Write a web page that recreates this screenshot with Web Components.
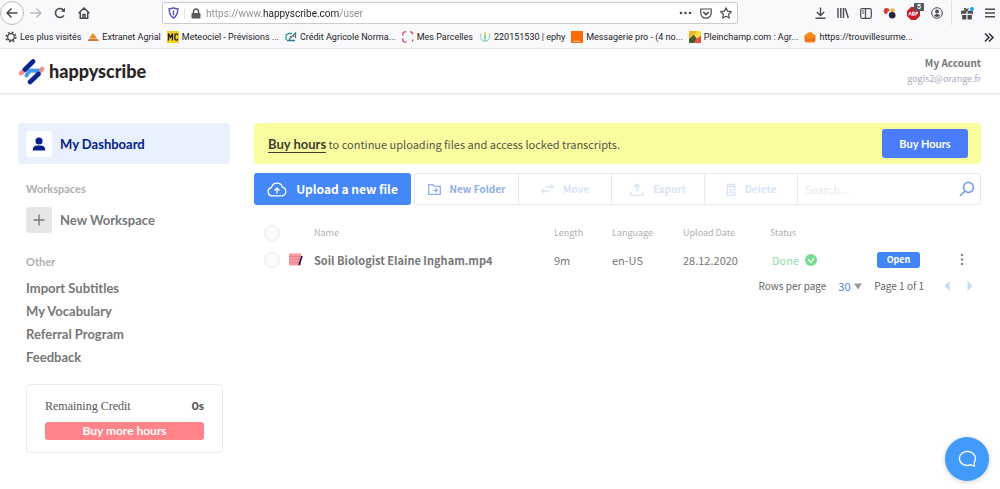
<!DOCTYPE html>
<html lang="en">
<head>
<meta charset="utf-8">
<meta name="viewport" content="width=device-width, initial-scale=1">
<title>Happy Scribe</title>
<style>
  body {
    margin: 0;
    background: #fff;
    color: #666;
    font: 12px/16px "Noto Sans CJK SC", "Noto Sans", sans-serif;
    --brand: #4285f5;
    --navy: #05208c;
    --line: #e6e8f0;
    --round: Lato, "Noto Sans", sans-serif;
    --system: Roboto, "Open Sans", sans-serif;
  }
</style>
</head>
<body>
<browser-toolbar></browser-toolbar>
<bookmark-bar>
  <bookmark-link kind="gear">Les plus visités</bookmark-link>
  <bookmark-link kind="agrial">Extranet Agrial</bookmark-link>
  <bookmark-link kind="mc">Meteociel - Prévisions ...</bookmark-link>
  <bookmark-link kind="ca">Crédit Agricole Norma...</bookmark-link>
  <bookmark-link kind="parcel">Mes Parcelles</bookmark-link>
  <bookmark-link kind="ephy">220151530 | ephy</bookmark-link>
  <bookmark-link kind="orange">Messagerie pro - (4 no...</bookmark-link>
  <bookmark-link kind="plein">Pleinchamp.com : Agr...</bookmark-link>
  <bookmark-link kind="house">https://trouvillesurme...</bookmark-link>
</bookmark-bar>
<app-header email="gogis2@orange.fr">My Account</app-header>
<app-layout>
  <side-nav slot="side"></side-nav>
  <hours-banner></hours-banner>
  <file-toolbar></file-toolbar>
  <file-table></file-table>
  <table-pager></table-pager>
</app-layout>
<chat-launcher></chat-launcher>

<script>
const define = (name, html, setup) => {
  const tpl = document.createElement('template');
  tpl.innerHTML = `<style>
    *, *::before { box-sizing: border-box; }
    :host { display: block; box-sizing: border-box; }
    button, input, select { font: inherit; color: inherit; border: 0; padding: 0; margin: 0; background: none; }
    a { color: inherit; text-decoration: none; }
    svg { display: block; flex: none; fill: none; }
    svg:not([stroke]) { stroke: currentColor; }
  </style>` + html;
  customElements.define(name, class extends HTMLElement {
    constructor() {
      super();
      this.attachShadow({ mode: 'open' }).append(tpl.content.cloneNode(true));
    }
    connectedCallback() { if (setup) setup(this, this.shadowRoot); }
  });
};

define('browser-toolbar', `<style>
  :host { display: flex; align-items: center; height: 26px; background: #f9f9fb; color: #4a4a50; font: 10px/16px var(--system); padding: 0 5px 0 0; }
  .nav { display: flex; align-items: center; width: 162px; flex: none; }
  .nav button { width: 24px; display: grid; place-items: center; }
  .nav .back { width: 24px; height: 24px; border: 1px solid #b9b9bd; border-radius: 50%; background: #fff; }
  .nav .next { color: #b9b9bd; }
  .nav .back svg { stroke-width: 1.500; }
  .url { display: flex; align-items: center; flex: 1; height: 22px; border: 1px solid #ccccd0; border-radius: 2px; background: #fff; padding: 0 5px; }
  .url .lock { border-left: 1px solid #e3e3e6; padding-left: 6px; margin: 0 5px; }
  .url input { flex: 1; min-width: 0; height: 18px; outline: 0; color: #222;
    background: linear-gradient(90deg, #8c8c90 57px, #1c1c20 57px 133px, #8c8c90 133px); background-clip: text; -webkit-background-clip: text; -webkit-text-fill-color: transparent; }
  .actions, .tools { display: flex; align-items: center; gap: 8px; }
  .tools { padding-left: 77px; gap: 11px; }
  .tools span { position: relative; }
  .count { position: absolute; left: 7px; top: -4px; background: #55565c; color: #fff; font: bold 7px/8px var(--system); padding: 0 3px; border-radius: 1px; }
  .menu { border-left: 1px solid #e0e0e3; height: 24px; padding-left: 9px; margin-left: -3px; display: flex; align-items: center; gap: 11px; }
</style>
<div class="nav">
  <button class="back" aria-label="Back"><svg width="12" height="12" viewBox="0 0 12 12"><path d="M11.500 6H1M5.500 1.500 1 6l4.500 4.500"/></svg></button>
  <button class="next" aria-label="Forward"><svg width="12" height="12" viewBox="0 0 12 12" stroke-width="1.300"><path d="M.5 6H11M6.500 1.500 11 6l-4.500 4.500"/></svg></button>
  <button aria-label="Reload"><svg width="12" height="12" viewBox="0 0 12 12" stroke-width="1.600"><path d="M9.800 8.300A4.500 4.500 0 1 1 9.500 3.200L10.500 4.200"/><path d="M11 .8v4H7z" fill="currentColor" stroke="none"/></svg></button>
  <button aria-label="Home"><svg width="12" height="12" viewBox="0 0 12 12" stroke-width="1.500"><path d="M.6 6.300 6 1l5.400 5.300M2.300 5.500v5.700h7.400V5.500M5 11V7.500h2V11"/></svg></button>
</div>
<div class="url">
  <svg width="11" height="12" viewBox="0 0 11 12" stroke="#5b55b8" stroke-width="1.500"><path d="M5.500.9C4.300 1.600 2.500 1.800 1.200 1.800c0 4.800.8 7.200 4.300 9.200 3.500-2 4.300-4.400 4.300-9.200-1.300 0-3.100-.2-4.300-.9z"/><path d="M5.500 3.500v4.700"/></svg>
  <span class="lock"><svg width="10" height="11" viewBox="0 0 10 11" stroke="#5a5a5e" stroke-width="1.500"><rect x=".5" y="5" width="9" height="5.500" rx=".8" fill="#5a5a5e" stroke="none"/><path d="M2.500 5.500V3.500a2.500 2.500 0 0 1 5 0v2"/></svg></span>
  <input type="text" aria-label="Address" value="https://www.happyscribe.com/user">
  <div class="actions">
    <svg width="13" height="4" viewBox="0 0 13 4" stroke="none"><g fill="#4a4a50"><circle cx="2" cy="2" r="1.300"/><circle cx="6.500" cy="2" r="1.300"/><circle cx="11" cy="2" r="1.300"/></g></svg>
    <svg width="12" height="11" viewBox="0 0 12 11" stroke-width="1.200"><path d="M.8 1h10.400v4.200a5.200 5 0 0 1-10.400 0z"/><path d="m3.300 4 2.700 2.600L8.700 4" stroke-width="1.500"/></svg>
    <svg width="12" height="12" viewBox="0 0 12 12" stroke-width="1.200" stroke-linejoin="round"><path d="m6 .8 1.600 3.400 3.700.5-2.700 2.600.7 3.700L6 9.200 2.700 11l.7-3.700L.7 4.700l3.700-.5z"/></svg>
  </div>
</div>
<div class="tools">
  <svg width="11" height="12" viewBox="0 0 11 12" stroke-width="1.400"><path d="M5.500.5v8M1.800 5l3.700 3.600L9.200 5M.5 11.300h10"/></svg>
  <svg width="12" height="12" viewBox="0 0 12 12" stroke-width="1.400"><path d="M1 1v10M3.800 1v10M6.500 1v10M8.200 1.200 11.300 11"/></svg>
  <svg width="12" height="11" viewBox="0 0 12 11" stroke-width="1.200"><rect x=".7" y=".7" width="10.600" height="9.600" rx="1.500"/><path d="M5.500.7v9.600M2.200 3h2M2.200 5h2"/></svg>
  <svg width="13" height="12" viewBox="0 0 13 12" stroke="none"><circle cx="3.600" cy="4" r="2.900" fill="#d0402e"/><circle cx="9.500" cy="3.500" r="2.200" fill="#e6b735"/><circle cx="6.500" cy="6.300" r="2.300" fill="#e8e8ea"/><circle cx="9.200" cy="8.200" r="3.300" fill="#20243f"/></svg>
  <span><svg width="13" height="13" viewBox="0 0 13 13" stroke="none"><path d="M4 0h5l4 4v5l-4 4H4L0 9V4z" fill="#c81f25"/><path d="M1.800 8.500 3.200 5l1.300 3.500M5.600 5v3.300h1.500V5zM8.800 8.500V5.200h1.700v1.500H9" stroke="#fff"/></svg><b class="count">5</b></span>
  <svg width="12" height="12" viewBox="0 0 12 12"><circle cx="6" cy="6" r="5.300"/><circle cx="6" cy="4.500" r="1.900" fill="currentColor" stroke="none"/><path d="M2.800 8.800Q6 5.300 9.200 8.800 6 11 2.800 8.800z" fill="currentColor" stroke="none"/></svg>
  <div class="menu">
    <svg width="13" height="13" viewBox="0 0 13 13" stroke-width="1.200"><path d="M.8 4.300h10.400v2.500H.8zM1.800 7v5h8.400V7" fill="currentColor"/><path d="M6 4v9M1 7.300h10" stroke="#f9f9fb"/><path d="M6 4C3 4 3 1 4.500 1.500 5.500 2 6 4 6 4s.5-2 1.500-2.500"/><circle cx="11" cy="2" r="2" fill="#1da1f2" stroke="none"/></svg>
    <svg width="10" height="10" viewBox="0 0 10 10" stroke-width="1.400"><path d="M0 1.300h10M0 5h10M0 8.700h10"/></svg>
  </div>
</div>`);

define('bookmark-bar', `<style>
  :host { display: flex; align-items: center; gap: 6px; height: 23px; padding: 0 6px 0 5px; background: #f9f9fb; border-bottom: 1px solid #e3e3e6; color: #222226; font: 9px/14px var(--system); }
  svg { margin-left: auto; }
</style><slot></slot>
<svg width="10" height="9" viewBox="0 0 10 9" stroke-width="1.400"><path d="m1 .5 4 4-4 4M5 .5l4 4-4 4"/></svg>`);

const bookmarkIcons = {
  gear: '<circle cx="6" cy="6" r="3.300" stroke="#444" stroke-width="1.200"/><circle cx="6" cy="6" r="4.800" stroke="#444" stroke-width="1.500" stroke-dasharray="1.900 1.870"/>',
  agrial: '<path d="M2 7.500 5.800 2l4.500 5.500z" fill="#f58a1f" stroke="none"/><path d="M1 8.500q5-1.500 10.500 0V10H1z" fill="#d3752f" stroke="none"/>',
  mc: '<path d="M0 0h12v12H0z" fill="#f0d11c" stroke="none"/><path d="M1.500 9.500v-7l2 4 2-4v7M10.700 4.200Q10.500 2.800 9.300 2.800 7.800 2.800 7.800 6t1.500 3.200q1.200 0 1.400-1.400" stroke="#222" stroke-width="1.300"/>',
  ca: '<path d="M1 9V4l3-1.500h3" stroke="#23a094" stroke-width="1.300"/><path d="M2 9.500h8M4 8.500 10.500 2v5" stroke="#337f8e" stroke-width="1.300"/><path d="M4.500 5.500h5" stroke="#bd7b78"/>',
  parcel: '<path d="M4.300.8H3A2 2 0 0 0 .8 3v1.500M.8 7.500V9A2 2 0 0 0 3 11.200h1.300M8 .8h1.200L11.200 3M11.200 8.500 10 10.500" stroke="#d3405a" stroke-width="1.300"/>',
  ephy: '<path d="M1.500 2.500v3a4.500 4.500 0 0 0 9 0v-3M3 9.500h6" stroke="#9ed8b8" stroke-width="1.300"/><path d="M6 4v4.500" stroke="#62bf9c" stroke-width="1.500"/><circle cx="6" cy="2.500" r="1.200" fill="#f4b860" stroke="none"/>',
  orange: '<path d="M0 0h12v12H0z" fill="#f96a07" stroke="none"/><path d="M2.500 10.300h7" stroke="#fcc39a"/>',
  plein: '<path d="M0 0h12v12H0z" fill="#f3b428" stroke="none"/><path d="M0 8 6 3l2 5-3 4H0z" fill="#3f5b38" stroke="none"/><path d="m5 4 3-4h4v4L8 8z" fill="#f6dc45" stroke="none"/><path d="m7 8 5-3v7H5z" fill="#e2543c" stroke="none"/>',
  house: '<path d="m6 .5 5.500 3.800V10L10 11.500H2L.5 10V4.300z" fill="#f68b1e" stroke="none"/><path d="m1 5 5 3.500L11 5v5.500H1z" fill="#ee7317" stroke="none"/>'
};
define('bookmark-link', `<style>
  :host { flex: none; }
  a { display: flex; align-items: center; gap: 3px; white-space: nowrap; }
</style><a href="#"><svg width="12" height="12" viewBox="0 0 12 12"></svg><slot></slot></a>`,
  (el, root) => { root.querySelector('svg').innerHTML = bookmarkIcons[el.getAttribute('kind')]; });

define('app-header', `<style>
  :host { display: flex; align-items: center; justify-content: space-between; height: 45px; padding: 0 19px 0 18px; background: #fff; border-bottom: 1px solid #e2e2e2; box-shadow: 0 1px 1px #0000000d; }
  .logo { display: flex; align-items: center; gap: 4px; color: #2b2626; font: 900 18px/24px var(--round); }
  .who { text-align: right; font-weight: 700; font-size: 10px; line-height: 16px; color: #777; }
  .who small { display: block; font-weight: 400; font-size: 9px; line-height: 16px; color: #a9a9bb; }
</style>
<a class="logo" href="#"><svg width="27" height="27" viewBox="0 0 27 27" stroke-linecap="round" stroke-width="4.600"><path d="M3.200 15 7 12M20 15l4-3.800" stroke="#f58a92"/><path d="M8.500 17.500C12 9.500 15 14 19.500 12.500" stroke="#3f9bf5" stroke-width="4"/><path d="M7 11.500 15 3.500M12 24l8.500-8" stroke="#0a2391"/></svg>happyscribe</a>
<div class="who"><slot></slot><small></small></div>`,
  (el, root) => { root.querySelector('small').textContent = el.getAttribute('email'); });

define('app-layout', `<style>
  :host { display: grid; grid-template-columns: 212px minmax(0, 1fr); gap: 24px; padding: 29px 19px 32px 18px; }
</style><aside><slot name="side"></slot></aside><main><slot></slot></main>`);

define('side-nav', `<style>
  :host { font: 700 13px/18px var(--round); color: #777; }
  .row { display: flex; align-items: center; gap: 8px; padding: 0 8px; height: 41px; border-radius: 4px; }
  .tile { width: 26px; height: 26px; border-radius: 3px; display: grid; place-items: center; background: #e6e6e6; flex: none; }
  .active { background: #e8effd; color: var(--navy); }
  .active .tile { background: #fff; }
  h2 { margin: 0; padding-left: 8px; font: 700 11px/14px var(--round); color: #b0b0b0; }
  h2.first { margin-top: 18px; }
  .add { margin: 3px 0 15px; }
  ul { list-style: none; margin: 8px 0 0; padding: 0 0 0 8px; line-height: 23px; }
  .credit { margin: 15px 7px 0 8px; padding: 12px 18px; border: 1px solid #ebebeb; border-radius: 4px; }
  .line { display: flex; justify-content: space-between; line-height: 18px; font-size: 12px; color: #555; margin-bottom: 6px; }
  .line span { font: 12px/18px "Liberation Serif", serif; }
  .credit button { width: 100%; height: 18px; border-radius: 3px; background: #ff8389; color: #fff; font-size: 12px; line-height: 18px; }
</style>
<a class="row active" href="#"><span class="tile"><svg width="14" height="14" viewBox="0 0 14 14" stroke="none"><g fill="currentColor"><circle cx="7" cy="4" r="3.600"/><path d="M.8 13.500V12Q1.500 8.500 5 8.500h4q3.500 0 4.200 3.500v1.500z"/></g></svg></span>My Dashboard</a>
<h2 class="first">Workspaces</h2>
<a class="row add" href="#"><span class="tile"><svg width="12" height="12" viewBox="0 0 12 12" stroke-width="1.300"><path d="M6 .5v11M.5 6h11"/></svg></span>New Workspace</a>
<h2>Other</h2>
<ul>
  <li><a href="#">Import Subtitles</a></li>
  <li><a href="#">My Vocabulary</a></li>
  <li><a href="#">Referral Program</a></li>
  <li><a href="#">Feedback</a></li>
</ul>
<div class="credit">
  <div class="line"><span>Remaining Credit</span><b>0s</b></div>
  <button>Buy more hours</button>
</div>`);

define('hours-banner', `<style>
  :host { display: flex; align-items: center; justify-content: space-between; height: 41px; padding: 0 13px 0 14px; border-radius: 4px; background: #f9fd9f; color: #55554a; font-size: 11px; line-height: 16px; }
  a { font: 700 13px/16px var(--round); color: #3f3f35; border-bottom: 1px solid; }
  button { width: 86px; height: 29px; border-radius: 3px; background: #4a7dfb; color: #fff; font: 700 11px/16px var(--round); }
</style>
<span><a href="#">Buy hours</a> to continue uploading files and access locked transcripts.</span>
<button>Buy Hours</button>`);

define('file-toolbar', `<style>
  :host { display: flex; margin-top: 9px; height: 32px; gap: 3px; }
  button { display: flex; align-items: center; justify-content: center; white-space: nowrap; }
  .upload { width: 157px; gap: 9px; border-radius: 3px; background: #4487f8; color: #fff; font-weight: 700; font-size: 12px; line-height: 16px; }
  .group { flex: 1; display: flex; border: 1px solid var(--line); border-radius: 3px; font-weight: 700; font-size: 10px; line-height: 16px; color: #d8e4f7; }
  .group button { gap: 9px; width: 93px; border-right: 1px solid var(--line); }
  .group .folder { width: 104px; color: #8fb0ea; }
  .search { flex: 1; display: flex; align-items: center; padding: 0 5px 0 7px; color: #7d9fe0; }
  input { flex: 1; min-width: 0; outline: 0; font-weight: 400; font-size: 11px; }
  input::placeholder { color: #e6e9f0; opacity: 1; }
</style>
<button class="upload"><svg width="20" height="15" viewBox="0 0 20 15" stroke-width="1.300"><path d="M5 13.800a4.200 4.200 0 0 1-.5-8.300 5.700 5.700 0 0 1 11-.3 4.400 4.400 0 0 1-.5 8.600z"/><path d="M10 11.500V6.300M7.500 8.500 10 6l2.500 2.500"/></svg>Upload a new file</button>
<div class="group">
  <button class="folder"><svg width="13" height="11" viewBox="0 0 13 11" stroke-width="1.300"><path d="M.7 10.300V.7h4l1.500 1.600h6.100v8zM5.800 6.300h4.400M8 4.100v4.400"/></svg>New Folder</button>
  <button><svg width="13" height="10" viewBox="0 0 13 10" stroke-width="1.300"><path d="M4 2.800h8M9.800.5 12.200 2.800 9.800 5M9 7.200H1M3.200 5 .8 7.200l2.400 2.300"/></svg>Move</button>
  <button><svg width="14" height="13" viewBox="0 0 14 13" stroke-width="1.300"><path d="M7 9V1M4 4l3-3 3 3M.7 8.500v3.800h12.600V8.500"/></svg>Export</button>
  <button><svg width="10" height="13" viewBox="0 0 10 13" stroke-width="1.300"><path d="M.5 1.500h9M.5 3.500h9M1.300 3.500v8.800h7.400V3.500M3.300 6l3.400 4M6.700 6l-3.400 4"/></svg>Delete</button>
  <label class="search"><input type="search" placeholder="Search..." aria-label="Search"><svg width="16" height="16" viewBox="0 0 16 16" stroke-width="1.700"><circle cx="9.500" cy="6.300" r="5"/><path d="m6 10-5 5"/></svg></label>
</div>`);

define('file-table', `<style>
  table { width: 100%; margin-top: 14px; border-collapse: collapse; table-layout: fixed; font-size: 11px; line-height: 16px; color: #777; }
  th { font-weight: 400; font-size: 9px; color: #b0b0b0; text-align: left; }
  th, td { padding: 0; height: 27px; white-space: nowrap; vertical-align: middle; }
  th:first-child, td:first-child { padding-left: 10px; }
  input { display: block; appearance: none; width: 16px; height: 16px; border: 1px solid #ebebeb; border-radius: 50%; background: #fafafa; }
  .name { font-weight: 700; }
  .done { display: flex; align-items: center; gap: 6px; padding-left: 2px; color: #8ce0a5; }
  .open { display: block; width: 43px; height: 16px; border-radius: 3px; background: #4285f5; color: #fff; font-weight: 700; font-size: 9px; line-height: 16px; }
  .more { width: 18px; height: 16px; display: grid; place-items: center; margin-left: 9px; }
</style>
<table>
  <colgroup><col style="width:35px"><col style="width:25px"><col><col style="width:58px"><col style="width:71px"><col style="width:87px"><col style="width:107px"><col style="width:67px"><col style="width:37px"></colgroup>
  <thead><tr><th><input type="checkbox" aria-label="Select all files"></th><th></th><th>Name</th><th>Length</th><th>Language</th><th>Upload Date</th><th>Status</th><th></th><th></th></tr></thead>
  <tbody><tr>
    <td><input type="checkbox" aria-label="Select Soil Biologist Elaine Ingham.mp4"></td>
    <td><svg width="14" height="13" viewBox="0 0 14 13"><path d="M0 .5h12v12H0z" fill="#f79aa0" stroke="none"/><path d="M0 3.500h12M0 6.500h12M0 9.500h12" stroke="#ea808a" stroke-width=".8"/><path d="m13 3-3 9" stroke="#1b1f6b" stroke-width="1.700"/></svg></td>
    <td class="name">Soil Biologist Elaine Ingham.mp4</td><td>9m</td><td>en-US</td><td>28.12.2020</td>
    <td><span class="done">Done<svg width="12" height="12" viewBox="0 0 12 12"><circle cx="6" cy="6" r="6" fill="#77dc95" stroke="none"/><path d="m3.300 5.500 2.700 3 2.800-4.500" stroke="#fff" stroke-width="1.300"/></svg></span></td>
    <td><button class="open">Open</button></td>
    <td><button class="more" aria-label="More actions"><svg width="4" height="13" viewBox="0 0 4 13" stroke="none"><g fill="#888"><circle cx="2" cy="2" r="1.300"/><circle cx="2" cy="6.500" r="1.300"/><circle cx="2" cy="11" r="1.300"/></g></svg></button></td>
  </tr></tbody>
</table>`);

define('table-pager', `<style>
  :host { display: flex; justify-content: flex-end; align-items: center; height: 26px; padding-right: 8px; font-size: 10px; line-height: 16px; color: #666; }
  label { display: flex; align-items: center; gap: 12px; }
  .pick { display: flex; align-items: center; margin-right: 12px; color: #4c83dd; font-size: 11px; }
  select { appearance: none; width: 24px; margin-right: -8px; padding-right: 8px; outline: 0; font-size: 11px; }
  .pick svg { pointer-events: none; }
  button { width: 6px; height: 12px; margin-left: 20px; }
  button + button { margin-left: 17px; }
</style>
<label>Rows per page<span class="pick"><select><option>30</option></select><svg width="8" height="7" viewBox="0 0 8 7" stroke="none"><path d="M0 .5h8L4 6.500z" fill="#999"/></svg></span></label>
<span>Page 1 of 1</span>
<button aria-label="Previous page"><svg width="6" height="12" viewBox="0 0 6 12" stroke="none"><path d="M5.500 1v10L.5 6z" fill="#c5d9f7"/></svg></button>
<button aria-label="Next page"><svg width="6" height="12" viewBox="0 0 6 12" stroke="none"><path d="M.5 1v10l5-5z" fill="#c5d9f7"/></svg></button>`);

define('chat-launcher', `<style>
  :host { position: fixed; right: 11px; bottom: 8px; }
  button { width: 44px; height: 44px; border-radius: 50%; display: grid; place-items: center; background: #429bfb; color: #fff; box-shadow: 0 1px 5px #0003; }
</style>
<button aria-label="Open chat"><svg width="18" height="18" viewBox="0 0 18 18" stroke-width="1.300" stroke-linejoin="round"><path d="M16.300 16.300V12A8 7 0 1 0 13 14.700Q14.500 15.500 16.300 16.300z"/></svg></button>`);
</script>
</body>
</html>
